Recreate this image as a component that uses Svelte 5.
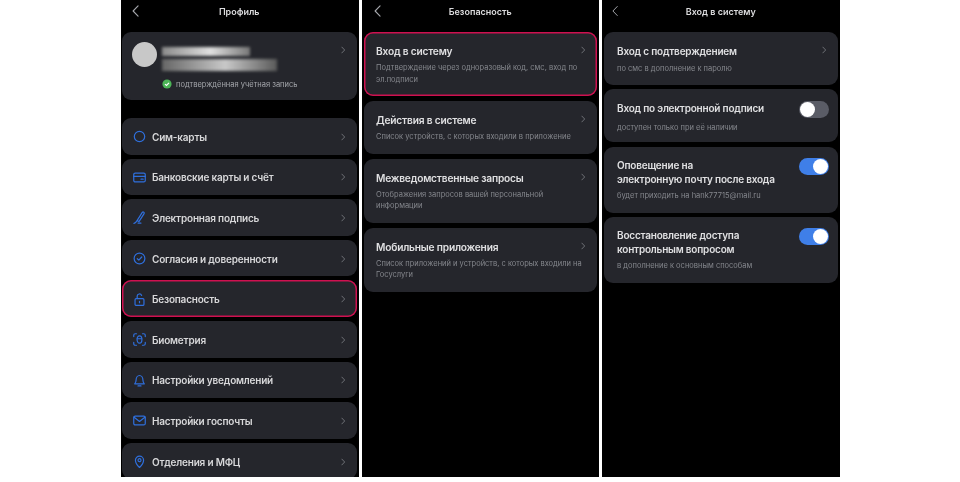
<script>
  const menu = [
    { label: 'Сим-карты', icon: 'sim' },
    { label: 'Банковские карты и счёт', icon: 'card' },
    { label: 'Электронная подпись', icon: 'sign' },
    { label: 'Согласия и доверенности', icon: 'check' },
    { label: 'Безопасность', icon: 'lock', active: true },
    { label: 'Биометрия', icon: 'bio' },
    { label: 'Настройки уведомлений', icon: 'bell' },
    { label: 'Настройки госпочты', icon: 'mail' },
    { label: 'Отделения и МФЦ', icon: 'pin' }
  ];
  const security = [
    { title: 'Вход в систему', sub: 'Подтверждение через одноразовый код, смс, вход по эл.подписи', active: true, tall: true },
    { title: 'Действия в системе', sub: 'Список устройств, с которых входили в приложение' },
    { title: 'Межведомственные запросы', sub: 'Отображения запросов вашей персональной информации', tall: true },
    { title: 'Мобильные приложения', sub: 'Список приложений и устройств, с которых входили на Госуслуги', tall: true }
  ];
  const login = [
    { title: ['Вход с подтверждением'], sub: 'по смс в дополнение к паролю', chevron: true },
    { title: ['Вход по электронной подписи'], sub: 'доступен только при её наличии', toggle: 'off' },
    { title: ['Оповещение на', 'электронную почту после входа'], sub: 'будет приходить на hank77715@mail.ru', toggle: 'on' },
    { title: ['Восстановление доступа', 'контрольным вопросом'], sub: 'в дополнение к основным способам', toggle: 'on' }
  ];
</script>

{#snippet chevron()}
  <svg class="chev" viewBox="0 0 6 9" aria-hidden="true"><path d="M1 1l3.4 3.5L1 8" /></svg>
{/snippet}

{#snippet header(title)}
  <header class="bar">
    <svg class="back" viewBox="0 0 8 14" aria-hidden="true"><path d="M7 1L1.2 7 7 13" /></svg>
    <span>{title}</span>
  </header>
{/snippet}

{#snippet icon(name)}
  <svg class="ico" viewBox="0 0 14 14" aria-hidden="true">
    {#if name === 'sim'}
      <circle cx="7" cy="7" r="5.6" />
    {:else if name === 'card'}
      <rect x="0.8" y="2.2" width="12.4" height="9.6" rx="1.6" /><path d="M0.8 5.800h12.400M8.600 8.800h2.400" />
    {:else if name === 'sign'}
      <path d="M1 13.400c1.600-.3 2.400-1.200 3.200-2.800L9.800 1.800c.5-.7 1.200-.9 1.800-.5s.6 1.200.2 1.800L6.400 11.400 4.400 10.200M5.400 13h3.200" />
    {:else if name === 'check'}
      <circle cx="7" cy="7" r="5.800" /><path d="M4.600 7.200l1.700 1.600 3.100-3.400" />
    {:else if name === 'lock'}
      <rect x="2.200" y="6" width="9.600" height="7.400" rx="1.200" /><path d="M4.500 6V3.400a2.500 2.500 0 0 1 4.800-.8M7 9v1.400" />
    {:else if name === 'bio'}
      <path d="M.8 3.800V2.400C.8 1.500 1.500.8 2.400.8h1.400M10.200.8h1.400c.9 0 1.600.7 1.600 1.600v1.400M13.200 10.200v1.400c0 .9-.7 1.600-1.600 1.600h-1.400M3.800 13.200H2.400c-.9 0-1.600-.7-1.600-1.600v-1.400" /><ellipse cx="7" cy="7" rx="2.600" ry="4" /><path d="M4.600 6.200h4.800" />
    {:else if name === 'bell'}
      <path d="M1.800 10.600c1-1 1.500-1.800 1.500-3.800C3.300 3.800 5 1.600 7 1.600s3.700 2.200 3.700 5.200c0 2 .5 2.800 1.500 3.800zM5.400 12.800h3.200" />
    {:else if name === 'mail'}
      <rect x="0.800" y="2.200" width="12.400" height="9.600" rx="1.600" /><path d="M1.200 3.400L7 8l5.800-4.600" />
    {:else if name === 'pin'}
      <path d="M7 13.400C4.400 10.900 2.600 8.400 2.600 5.600a4.400 4.400 0 0 1 8.800 0c0 2.800-1.800 5.300-4.400 7.800z" /><circle cx="7" cy="5.600" r="1.600" />
    {/if}
  </svg>
{/snippet}

<main class="page">
  <section class="phone first">
    {@render header('Профиль')}
    <div class="profile">
      <div class="user">
        <div class="avatar"></div>
        <div class="smudges">
          <div class="smudge short"></div>
          <div class="smudge long"></div>
        </div>
        {@render chevron()}
      </div>
      <div class="verified">
        <svg class="ok" viewBox="0 0 10 10" aria-hidden="true"><circle cx="5" cy="5" r="4.600" /><path d="M3 5.100l1.500 1.400L7 3.800" /></svg>
        <span>подтверждённая учётная запись</span>
      </div>
    </div>
    <div class="menu">
      {#each menu as item}
        <div class="row" class:active={item.active}>
          {@render icon(item.icon)}
          <span class="label">{item.label}</span>
          {@render chevron()}
        </div>
      {/each}
    </div>
  </section>

  <section class="phone">
    {@render header('Безопасность')}
    <div class="cards">
      {#each security as c}
        <div class="card" class:active={c.active} class:tall={c.tall}>
          <div class="top">
            <span class="title">{c.title}</span>
            {@render chevron()}
          </div>
          <p class="sub">{c.sub}</p>
        </div>
      {/each}
    </div>
  </section>

  <section class="phone last">
    {@render header('Вход в систему')}
    <div class="cards wide">
      {#each login as c}
        <div class="card setting">
          <div class="top">
            <span class="title">
              {#each c.title as line}<span class="line">{line}</span>{/each}
            </span>
            {#if c.chevron}
              {@render chevron()}
            {:else}
              <span class="switch" class:on={c.toggle === 'on'}><i></i></span>
            {/if}
          </div>
          <p class="sub">{c.sub}</p>
        </div>
      {/each}
    </div>
  </section>
</main>

<style>
  :global(body) {
    margin: 0;
    background: #fff;
  }
  .page {
    width: 960px;
    height: 482px;
    display: flex;
    gap: 3px;
    padding-left: 121px;
    box-sizing: border-box;
    font-family: Inter, "Noto Sans", sans-serif;
    overflow: hidden;
  }
  .phone {
    width: 237.500px;
    height: 477px;
    flex: none;
    background: #000;
    overflow: hidden;
    padding: 0 2px;
    box-sizing: border-box;
    filter: blur(0.3px);
  }
  .phone.first {
    padding: 0 2px 0 1px;
  }
  .bar {
    height: 32px;
    position: relative;
    display: flex;
    align-items: center;
    justify-content: center;
    padding-bottom: 9px;
    box-sizing: border-box;
    color: #dcdcde;
    font-size: 9px;
    font-weight: 600;
  }
  .back {
    position: absolute;
    left: 10px;
    top: 5px;
    width: 7px;
    height: 12px;
    fill: none;
    stroke: #a6a8ad;
    stroke-width: 1.300;
    stroke-linecap: round;
    stroke-linejoin: round;
  }
  .last .back {
    left: 8px;
    width: 6px;
  }
  .chev {
    width: 5px;
    height: 8px;
    flex: none;
    fill: none;
    stroke: #75777d;
    stroke-width: 1.100;
    stroke-linecap: round;
    stroke-linejoin: round;
  }
  .profile {
    height: 68px;
    background: #25262c;
    border-radius: 9px;
    padding: 10px 11px 0 10px;
    box-sizing: border-box;
    margin-bottom: 18px;
  }
  .user {
    display: flex;
    align-items: flex-start;
  }
  .avatar {
    width: 25px;
    height: 25px;
    border-radius: 50%;
    background: #c8c8c8;
    flex: none;
  }
  .smudges {
    flex: 1;
    display: flex;
    flex-direction: column;
    gap: 3px;
    margin-left: 5px;
    padding-top: 5px;
  }
  .smudge {
    height: 10px;
    filter: blur(1.500px);
    background: linear-gradient(90deg, #8a8a8a, #e0e0e0 55%, #777);
  }
  .smudge.short { width: 88px; height: 9px; }
  .smudge.long { width: 115px; height: 12px; background: linear-gradient(90deg, #666, #c8c8c8 55%, #5a5a5a); }
  .user .chev { margin-top: 4px; }
  .verified {
    display: flex;
    align-items: center;
    gap: 4px;
    margin: 8px 0 0 30px;
    color: #a5a7ac;
    font-size: 7.500px;
  }
  .ok { width: 10px; height: 10px; flex: none; }
  .ok circle { fill: #4cb557; }
  .ok path { fill: none; stroke: #fff; stroke-width: 1.200; }
  .menu {
    display: flex;
    flex-direction: column;
    gap: 4px;
  }
  .row {
    height: 36.600px;
    flex: none;
    background: #25262c;
    border-radius: 9px;
    display: flex;
    align-items: center;
    padding: 1px 11px 0 11px;
    box-sizing: border-box;
  }
  .row.active, .card.active {
    box-shadow: inset 0 0 0 1.500px #cf1050;
  }
  .ico {
    width: 13px;
    height: 13px;
    flex: none;
    fill: none;
    stroke: #2f6fdc;
    stroke-width: 1.300;
    stroke-linecap: round;
    stroke-linejoin: round;
  }
  .label {
    flex: 1;
    margin-left: 6px;
    color: #d8d8da;
    font-size: 10px;
    letter-spacing: -0.2px;
    font-weight: 600;
  }
  .cards {
    display: flex;
    flex-direction: column;
    gap: 5px;
  }
  .card {
    height: 52.500px;
    background: #25262c;
    border-radius: 9px;
    padding: 12px 11px 0 12.500px;
    box-sizing: border-box;
    flex: none;
  }
  .card.tall { height: 64px; }
  .top {
    display: flex;
    justify-content: space-between;
    align-items: flex-start;
  }
  .top .chev { margin-top: 2px; }
  .title {
    color: #e0e0e2;
    font-size: 10.200px;
    letter-spacing: -0.2px;
    font-weight: 600;
    line-height: 14px;
  }
  .line { display: block; }
  .sub {
    margin: 4px 0 0;
    color: #85878d;
    font-size: 7.500px;
    line-height: 11.500px;
  }
  .wide {
    gap: 4.300px;
  }
  .wide .card {
    height: 53px;
    padding: 12px 9px 0 13px;
  }
  .wide .title {
    font-size: 10px;
  }
  .wide .card:nth-child(3),
  .wide .card:nth-child(4) {
    height: 66px;
    padding-top: 11.500px;
  }
  .wide .sub { margin-top: 4.500px; }
  .wide .card:nth-child(3) .sub,
  .wide .card:nth-child(4) .sub { margin-top: 4px; }
  .wide .card:first-child .chev { margin-right: 1.500px; }
  .switch {
    width: 30px;
    height: 17px;
    border-radius: 9px;
    background: #5a5c66;
    flex: none;
    padding: 1px;
    box-sizing: border-box;
    margin-top: -0.500px;
  }
  .switch i {
    display: block;
    width: 15px;
    height: 15px;
    border-radius: 50%;
    background: #fff;
  }
  .switch.on { background: #3f7fe8; }
  .switch.on i { margin-left: 13px; }
</style>
